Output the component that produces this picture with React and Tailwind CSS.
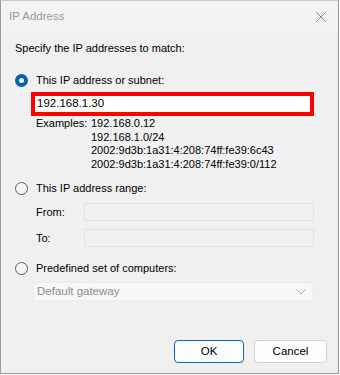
import { useState } from "react";

const Radio = ({ checked, label, onSelect }) => (
  <button
    type="button"
    onClick={onSelect}
    className="flex items-center gap-[8px] h-[16px] text-[11px] text-black"
  >
    <span
      className={
        checked
          ? "w-[13px] h-[13px] rounded-full bg-[#005fb8] flex items-center justify-center"
          : "w-[13px] h-[13px] rounded-full border border-[#5e5e5e] bg-[#f6f6f6]"
      }
    >
      {checked && <span className="w-[5px] h-[5px] rounded-full bg-white" />}
    </span>
    <span>{label}</span>
  </button>
);

const App = () => {
  const [mode, setMode] = useState("subnet");
  const [subnet, setSubnet] = useState("192.168.1.30");

  return (
    <div
      className="w-[340px] h-[375px] bg-white"
      style={{ fontFamily: '"Liberation Sans", Arial, sans-serif' }}
    >
      <div className="w-[339px] h-[374px] border border-[#9a9a9a] border-t-[#c8c8c8] bg-[#f0f0f0] flex flex-col">
        {/* title bar */}
        <div className="h-[31px] bg-[#f3f3f3] flex items-center justify-between pl-[8px] pr-[11px]">
          <span className="text-[11.5px] text-[#9a9a9a]">IP Address</span>
          <svg width="12" height="12" viewBox="0 0 12 12">
            <path d="M1 1 L11 11 M11 1 L1 11" stroke="#8a8a8a" strokeWidth="1" />
          </svg>
        </div>

        <div className="flex-1 flex flex-col pl-[14px] pr-[24px] text-[11px] text-black">
          <div className="mt-[9px] h-[14px] leading-[14px]">Specify the IP addresses to match:</div>

          <div className="mt-[17px]">
            <Radio
              checked={mode === "subnet"}
              label="This IP address or subnet:"
              onSelect={() => setMode("subnet")}
            />
          </div>

          <div className="ml-[16px] mt-[4px] h-[24px] border-[4px] border-[#ff0000] bg-white flex items-center">
            <input
              value={subnet}
              onChange={(e) => setSubnet(e.target.value)}
              className="w-full px-[2px] text-[11.5px] outline-none bg-transparent text-black"
            />
          </div>

          <div className="ml-[21px] mt-[1px] flex text-[11px] leading-[13.5px] text-black">
            <span className="w-[55px] shrink-0">Examples:</span>
            <div className="flex flex-col">
              <span>192.168.0.12</span>
              <span>192.168.1.0/24</span>
              <span>2002:9d3b:1a31:4:208:74ff:fe39:6c43</span>
              <span>2002:9d3b:1a31:4:208:74ff:fe39:0/112</span>
            </div>
          </div>

          <div className="mt-[9px]">
            <Radio
              checked={mode === "range"}
              label="This IP address range:"
              onSelect={() => setMode("range")}
            />
          </div>

          <div className="ml-[21px] mt-[7px] flex items-center">
            <span className="w-[48px] shrink-0">From:</span>
            <div className="w-[230px] h-[18px] border border-[#e2e2e2] bg-[#f0f0f0]" />
          </div>
          <div className="ml-[21px] mt-[8px] flex items-center">
            <span className="w-[48px] shrink-0">To:</span>
            <div className="w-[230px] h-[18px] border border-[#e2e2e2] bg-[#f0f0f0]" />
          </div>

          <div className="mt-[13px]">
            <Radio
              checked={mode === "predefined"}
              label="Predefined set of computers:"
              onSelect={() => setMode("predefined")}
            />
          </div>

          <div className="ml-[18px] mt-[6px] w-[280px] h-[19px] rounded-[3px] border border-[#ececec] bg-[#f7f7f7] flex items-center justify-between pl-[3px] pr-[6px]">
            <span className="text-[#8c8c8c] text-[11.5px]">Default gateway</span>
            <svg width="10" height="6" viewBox="0 0 10 6">
              <path d="M0.5 0.5 L5 5 L9.5 0.5" stroke="#a6a6a6" fill="none" strokeWidth="1" />
            </svg>
          </div>

          <div className="mt-auto mb-[10px] flex justify-end gap-[10px] mr-[-13px]">
            <button className="w-[70px] h-[23px] rounded-[4px] border border-[#0067c0] bg-[#fdfdfd] text-[11.5px]">
              OK
            </button>
            <button className="w-[73px] h-[23px] rounded-[4px] border border-[#d1d1d1] bg-[#fdfdfd] text-[11.5px]">
              Cancel
            </button>
          </div>
        </div>
      </div>
    </div>
  );
};

export default App;
